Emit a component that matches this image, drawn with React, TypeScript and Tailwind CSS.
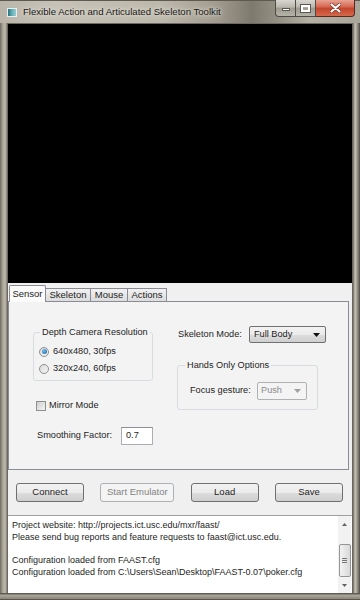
import React from "react";

function Radio({ checked }: { checked?: boolean }) {
  return (
    <span className="w-[10px] h-[10px] rounded-full border border-[#8e8f8f] bg-[linear-gradient(135deg,#d9d9d9,#f7f7f7)] flex items-center justify-center shrink-0">
      {checked && <span className="w-[5px] h-[5px] rounded-full bg-[radial-gradient(circle_at_35%_35%,#6cc0f0,#1c5f9e)]" />}
    </span>
  );
}

export default function App() {
  return (
    <div className="w-[360px] h-[600px] flex flex-col overflow-hidden bg-[#9a9588] font-['Liberation_Sans',Arial,sans-serif] text-[9.2px] text-[#1e1e1e]">
      {/* Title bar */}
      <div className="h-[23px] flex items-start shrink-0 bg-[linear-gradient(90deg,#b9b5aa_0%,#c6c2b7_15%,#bdb8ac_45%,#a19c8f_60%,#7f7a6e_70%,#989387_78%,#b4b0a4_86%,#aaa69a_100%)] border-t border-[#5d5a52]">
        <div className="flex items-center h-[22px] pl-[7px]">
          <span className="w-[10px] h-[9px] border border-[#e9eef0] bg-[linear-gradient(90deg,#2f6f80,#5fb3b5_50%,#9bc9d4)] shrink-0" />
          <span className="ml-[6px] text-[9.6px] whitespace-nowrap text-[#161616] [text-shadow:0_0_6px_#e8e4da,0_0_3px_#e8e4da]">
            Flexible Action and Articulated Skeleton Toolkit
          </span>
        </div>
        <div className="ml-auto mr-[5px] flex h-[17px] -mt-px">
          <div className="w-[21px] h-[17px] border border-[#4d4b45] border-t-0 rounded-bl-[4px] bg-[linear-gradient(180deg,#d8d6d0_0%,#b9b6ad_45%,#9e9a8f_50%,#b5b2a8_100%)] flex items-center justify-center">
            <span className="w-[8px] h-[3px] bg-white border border-[#5b5852] mt-[3px]" />
          </div>
          <div className="w-[20px] h-[17px] border border-[#4d4b45] border-t-0 border-l-0 bg-[linear-gradient(180deg,#d8d6d0_0%,#b9b6ad_45%,#9e9a8f_50%,#b5b2a8_100%)] flex items-center justify-center">
            <span className="w-[9px] h-[7px] border-[2px] border-white outline outline-1 outline-[#5b5852]" />
          </div>
          <div className="w-[39px] h-[17px] border border-[#5a2a22] border-t-0 border-l-0 rounded-br-[4px] bg-[linear-gradient(180deg,#e8a393_0%,#d4634d_45%,#c1442c_50%,#d7684c_100%)] flex items-center justify-center">
            <svg width="11" height="10" viewBox="0 0 11 10">
              <path d="M1.5 1.5 L9.5 8.5 M9.5 1.5 L1.5 8.5" stroke="#6a2a1e" strokeWidth="3.4" strokeLinecap="round" />
              <path d="M1.5 1.5 L9.5 8.5 M9.5 1.5 L1.5 8.5" stroke="#ffffff" strokeWidth="2.2" strokeLinecap="round" />
            </svg>
          </div>
        </div>
      </div>

      {/* Body */}
      <div className="flex flex-1 min-h-0">
        <div className="w-[7px] shrink-0 bg-[linear-gradient(90deg,#6e6a60,#aaa599_40%,#bdb9ad_75%,#7c786e)]" />
        <div className="flex-1 flex flex-col min-w-0 border border-[#6c6960] border-b-0">
          <div className="h-[259px] bg-black shrink-0" />
          <div className="bg-[#f0f0f0] flex flex-col shrink-0 h-[232px]">
            {/* Tabs */}
            <div className="flex items-end pl-[1px] pt-[3px] h-[18px] relative z-10">
              <div className="w-[37px] bg-[#fbfbfb] border border-[#898c95] border-b-0 rounded-t-[2px] flex items-center justify-center -mb-px h-[17px] text-[9.5px]">
                Sensor
              </div>
              <div className="w-[45px] h-[13px] bg-[linear-gradient(180deg,#f2f2f2,#dcdcdc)] border border-[#898c95] border-l-0 border-b-0 flex items-center justify-center text-[9.5px]">
                Skeleton
              </div>
              <div className="w-[37px] h-[13px] bg-[linear-gradient(180deg,#f2f2f2,#dcdcdc)] border border-[#898c95] border-l-0 border-b-0 flex items-center justify-center text-[9.5px]">
                Mouse
              </div>
              <div className="w-[39px] h-[13px] bg-[linear-gradient(180deg,#f2f2f2,#dcdcdc)] border border-[#898c95] border-l-0 border-b-0 flex items-center justify-center text-[9.5px]">
                Actions
              </div>
            </div>
            {/* Panel */}
            <div className="h-[169px] mr-[3px] border border-[#898c95] bg-[#f3f3f3] flex pl-[24px] shrink-0">
              {/* Left column */}
              <div className="w-[144px] pt-[24px] flex flex-col">
                <fieldset className="w-[120px] min-w-0 border border-[#d5dde1] rounded-[3px] px-[4px] pb-[3px]">
                  <legend className="ml-[2px] px-[2px] leading-[12px] whitespace-nowrap">Depth Camera Resolution</legend>
                  <div className="pt-[5px] flex flex-col">
                    <div className="h-[17px] flex items-center gap-[4px] pl-[1px]">
                      <Radio checked />
                      <span>640x480, 30fps</span>
                    </div>
                    <div className="h-[17px] flex items-center gap-[4px] pl-[1px]">
                      <Radio />
                      <span>320x240, 60fps</span>
                    </div>
                  </div>
                </fieldset>
                <div className="mt-[18px] h-[13px] flex items-center gap-[3px] pl-[3px]">
                  <span className="w-[10px] h-[10px] border border-[#8e8f8f] bg-[linear-gradient(135deg,#cfcfcf,#f4f4f4)] shrink-0" />
                  <span>Mirror Mode</span>
                </div>
                <div className="mt-[15px] h-[18px] flex items-center pl-[4px]">
                  <span className="w-[84px] whitespace-nowrap">Smoothing Factor:</span>
                  <div className="w-[32px] h-[18px] bg-white border border-[#abadb3] border-t-[#8e9095] flex items-center pl-[4px]">
                    0.7
                  </div>
                </div>
              </div>
              {/* Right column */}
              <div className="pt-[24px] flex flex-col">
                <div className="h-[17px] flex items-center">
                  <span className="w-[72px] pl-[1px] whitespace-nowrap">Skeleton Mode:</span>
                  <div className="w-[77px] h-[17px] rounded-[2px] border border-[#707070] bg-[linear-gradient(180deg,#f2f2f2_0%,#ebebeb_50%,#dddddd_51%,#cfcfcf_100%)] flex items-center pl-[4px] pr-[5px]">
                    <span className="flex-1">Full Body</span>
                    <svg width="7" height="4" viewBox="0 0 7 4"><path d="M0 0 H7 L3.5 4 Z" fill="#111" /></svg>
                  </div>
                </div>
                <fieldset className="mt-[16px] w-[141px] min-w-0 border border-[#d5dde1] rounded-[3px] pl-[12px] pb-[9px]">
                  <legend className="-ml-[5px] px-[2px] leading-[12px] whitespace-nowrap">Hands Only Options</legend>
                  <div className="pt-[11px] h-[29px] flex items-center">
                    <span className="w-[67px] whitespace-nowrap">Focus gesture:</span>
                    <div className="w-[50px] h-[18px] rounded-[2px] border border-[#adb2b5] bg-[#f4f4f4] flex items-center pl-[3px] pr-[5px] text-[#8d8d8d]">
                      <span className="flex-1">Push</span>
                      <svg width="7" height="4" viewBox="0 0 7 4"><path d="M0 0 H7 L3.5 4 Z" fill="#a0a0a0" /></svg>
                    </div>
                  </div>
                </fieldset>
              </div>
            </div>
            {/* Buttons */}
            <div className="flex justify-between pl-[8px] pr-[9px] pt-[13px]">
              <div className="w-[68px] h-[19px] rounded-[3px] border border-[#707070] bg-[linear-gradient(180deg,#f2f2f2_0%,#ebebeb_50%,#dddddd_51%,#cfcfcf_100%)] flex items-center justify-center text-[9.5px]">
                Connect
              </div>
              <div className="w-[74px] h-[19px] rounded-[3px] border border-[#adb2b5] bg-[#f4f4f4] flex items-center justify-center text-[#838383] text-[9.5px]">
                Start Emulator
              </div>
              <div className="w-[68px] h-[19px] rounded-[3px] border border-[#707070] bg-[linear-gradient(180deg,#f2f2f2_0%,#ebebeb_50%,#dddddd_51%,#cfcfcf_100%)] flex items-center justify-center text-[9.5px]">
                Load
              </div>
              <div className="w-[68px] h-[19px] rounded-[3px] border border-[#707070] bg-[linear-gradient(180deg,#f2f2f2_0%,#ebebeb_50%,#dddddd_51%,#cfcfcf_100%)] flex items-center justify-center text-[9.5px]">
                Save
              </div>
            </div>
          </div>
          {/* Log */}
          <div className="flex-1 bg-white border-t border-[#a0a0a0] flex min-h-0">
            <div className="flex-1 pl-[4px] pt-[4px] leading-[11.8px] whitespace-pre text-[9px]">
              <div>Project website: http://projects.ict.usc.edu/mxr/faast/</div>
              <div>Please send bug reports and feature requests to faast@ict.usc.edu.</div>
              <div>&nbsp;</div>
              <div>Configuration loaded from FAAST.cfg</div>
              <div>Configuration loaded from C:\Users\Sean\Desktop\FAAST-0.07\poker.cfg</div>
            </div>
            <div className="w-[13px] mr-[1px] bg-[#f2f2f2] flex flex-col items-center">
              <div className="h-[17px] flex items-center justify-center">
                <svg width="5" height="3" viewBox="0 0 5 3"><path d="M0 3 L2.5 0 L5 3 Z" fill="#606060" /></svg>
              </div>
              <div className="mt-[11px] w-[12px] h-[34px] rounded-[2px] border border-[#959595] bg-[linear-gradient(90deg,#f3f3f3,#e6e6e6_50%,#d9d9d9)] flex flex-col items-center justify-center gap-[1px]">
                <span className="w-[5px] h-px bg-[#777]" />
                <span className="w-[5px] h-px bg-[#777]" />
                <span className="w-[5px] h-px bg-[#777]" />
              </div>
              <div className="mt-auto h-[16px] flex items-center justify-center">
                <svg width="5" height="3" viewBox="0 0 5 3"><path d="M0 0 L5 0 L2.5 3 Z" fill="#606060" /></svg>
              </div>
            </div>
          </div>
        </div>
        <div className="w-[7px] shrink-0 bg-[linear-gradient(90deg,#6c695f,#c7c4ba_30%,#9b978b_60%,#4f4c45)]" />
      </div>
      <div className="h-[7px] shrink-0 bg-[linear-gradient(180deg,#4d4a43,#a9a598_35%,#8d897d_80%,#3f3c36)]" />
    </div>
  );
}
